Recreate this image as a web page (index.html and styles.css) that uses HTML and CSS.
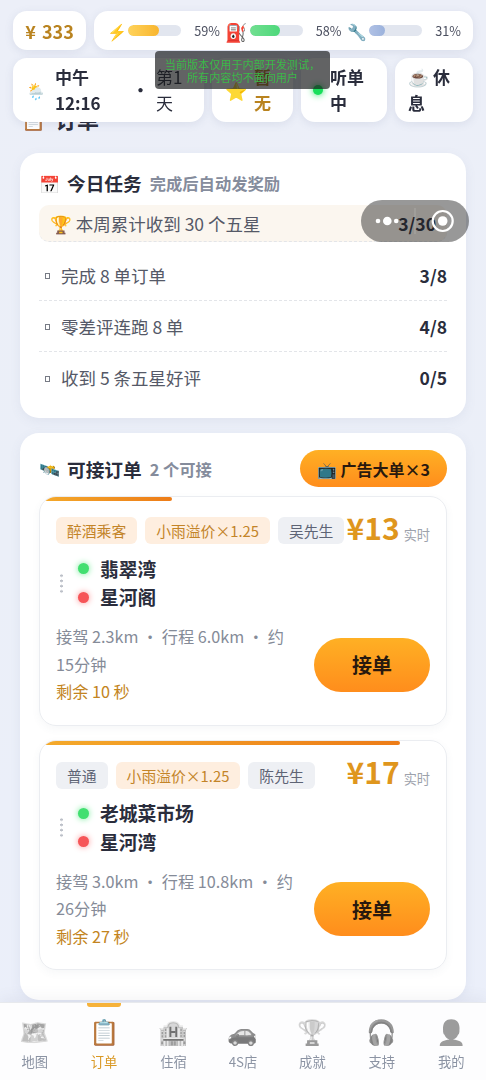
FILE: index.html
```html
<!DOCTYPE html>
<html lang="zh-CN">
<head>
<meta charset="utf-8">
<meta name="viewport" content="width=device-width, initial-scale=1">
<title>订单</title>
<link rel="stylesheet" href="styles.css">
</head>
<body>
<header class="hud">
  <div class="hud-row hud-top">
    <div class="panel coins">¥ 333</div>
    <div class="panel meters">
      <div class="meter"><span class="meter-icon">⚡</span><span class="track"><i class="fill gold" style="width:59%"></i></span><b class="pct">59%</b></div>
      <div class="meter"><span class="meter-icon fuel">⛽</span><span class="track"><i class="fill green" style="width:58%"></i></span><b class="pct">58%</b></div>
      <div class="meter"><span class="meter-icon wrench">🔧</span><span class="track"><i class="fill blue" style="width:31%"></i></span><b class="pct">31%</b></div>
    </div>
  </div>
  <div class="hud-row hud-bottom">
    <div class="panel clock"><span class="weather">🌦️</span><strong class="time">中午<br>12:16</strong><span class="sep">·</span><span class="day">第1<br>天</span></div>
    <div class="panel rating"><span class="star">⭐</span><strong class="none">暂<br>无</strong></div>
    <div class="panel listening"><span class="live"></span><strong>听单<br>中</strong></div>
    <div class="panel rest"><strong><span class="cup">☕</span> 休<br>息</strong></div>
  </div>
</header>

<main class="page">
  <h1 class="page-title"><span class="title-icon">📋</span>订单</h1>

  <section class="card tasks">
    <div class="card-head"><span class="head-icon">📅</span><h2>今日任务</h2><span class="hint">完成后自动发奖励</span></div>
    <div class="task weekly"><span>🏆 本周累计收到 30 个五星</span><b>3/30</b></div>
    <div class="task"><i class="box"></i><span>完成 8 单订单</span><b>3/8</b></div>
    <div class="task"><i class="box"></i><span>零差评连跑 8 单</span><b>4/8</b></div>
    <div class="task"><i class="box"></i><span>收到 5 条五星好评</span><b>0/5</b></div>
  </section>

  <section class="card orders">
    <div class="card-head"><span class="head-icon">🛰️</span><h2>可接订单</h2><span class="hint">2 个可接</span><button class="btn ad">📺 广告大单×3</button></div>

    <article class="order">
      <div class="progress" style="width:32.5%"></div>
      <div class="order-top"><div class="tags"><span class="tag warm">醉酒乘客</span><span class="tag warm">小雨溢价×1.25</span><span class="tag">吴先生</span></div><div class="price">¥13<small>实时</small></div></div>
      <div class="route"><i class="dots"></i><ul><li class="from">翡翠湾</li><li class="to">星河阁</li></ul></div>
      <div class="order-foot"><p>接驾 2.3km ・ 行程 6.0km ・ 约<br>15分钟<br><em>剩余 10 秒</em></p><button class="btn take">接单</button></div>
    </article>

    <article class="order">
      <div class="progress" style="width:88.6%"></div>
      <div class="order-top"><div class="tags"><span class="tag">普通</span><span class="tag warm">小雨溢价×1.25</span><span class="tag">陈先生</span></div><div class="price">¥17<small>实时</small></div></div>
      <div class="route"><i class="dots"></i><ul><li class="from">老城菜市场</li><li class="to">星河湾</li></ul></div>
      <div class="order-foot"><p>接驾 3.0km ・ 行程 10.8km ・ 约<br>26分钟<br><em>剩余 27 秒</em></p><button class="btn take">接单</button></div>
    </article>
  </section>
</main>

<div class="notice">当前版本仅用于内部开发测试，<br>所有内容均不面向用户</div>
<div class="capsule">
  <svg width="108" height="42" viewBox="0 0 108 42">
    <g fill="#fff"><circle cx="17" cy="21" r="2.3"/><circle cx="26.3" cy="21" r="4.3"/><circle cx="35.2" cy="21" r="2.3"/><circle cx="81.7" cy="21" r="4.8"/></g>
    <path d="M54 8v26" stroke="#fff" stroke-opacity=".2"/>
    <circle cx="81.7" cy="21" r="10" fill="none" stroke="#fff" stroke-width="2.2"/>
  </svg>
</div>

<nav class="tabs">
  <a class="tab"><span>🗺️</span>地图</a>
  <a class="tab active"><span>📋</span>订单</a>
  <a class="tab"><span>🏨</span>住宿</a>
  <a class="tab"><span>🚗</span>4S店</a>
  <a class="tab"><span>🏆</span>成就</a>
  <a class="tab"><span>🎧</span>支持</a>
  <a class="tab"><span>👤</span>我的</a>
</nav>
</body>
</html>
```
FILE: styles.css
```css
* { box-sizing: border-box; }
body {
  margin: 0;
  height: 1080px;
  overflow: hidden;
  background: linear-gradient(180deg, #eceff8, #ebeff8 50%, #ebeffa);
  color: #2a2d3c;
  font-family: "Noto Sans CJK SC", "Noto Color Emoji", sans-serif;
}
h1, h2, p, ul { margin: 0; padding: 0; }
button { border: 0; font-family: inherit; }
strong, b { font-weight: 700; }

/* Status panels */
.hud { position: fixed; z-index: 5; top: 11px; left: 13px; right: 13px; display: flex; flex-direction: column; gap: 8px; }
.hud-row { display: flex; gap: 8px; }
.hud-top { height: 39px; }
.hud-bottom { height: 64px; line-height: 26px; font-size: 17px; }
.panel { display: flex; align-items: center; background: #fff; border-radius: 14px; box-shadow: 0 2px 8px rgba(90, 105, 145, .13); white-space: nowrap; }
.coins { width: 73px; justify-content: center; color: #b9831f; font-size: 18px; font-weight: 700; word-spacing: 2px; }
.meters { flex: 1; padding: 0 12px 0 13px; justify-content: space-between; }
.meter { display: flex; align-items: center; }
.meter-icon { width: 21px; font-size: 16px; line-height: 20px; }
.meter .fuel { width: 24px; font-size: 18px; }
.meter .wrench { width: 22px; }
.track { width: 53px; height: 11px; border-radius: 6px; background: #e2e6ef; overflow: hidden; }
.fill { display: block; height: 100%; border-radius: 6px; }
.gold { background: linear-gradient(90deg, #ffd35b, #f8b52e); }
.green { background: linear-gradient(90deg, #72df91, #4dd87a); }
.blue { background: linear-gradient(90deg, #b0c1e5, #9bb2dc); }
.pct { width: 39px; text-align: right; font-size: 12.7px; font-weight: 400; color: #4c5060; }
.clock { width: 191px; padding-left: 13px; }
.weather { width: 29px; font-size: 16px; }
.time { width: 77px; }
.sep { width: 24px; font-weight: 700; }
.day { font-weight: 400; }
.rating { width: 81px; padding-left: 13px; }
.star { width: 29px; font-size: 18px; }
.none { color: #b9831f; }
.listening { width: 86px; padding-left: 12px; gap: 7px; }
.live { width: 10px; height: 10px; border-radius: 50%; background: #18df5b; box-shadow: 0 0 7px #18df5b; }
.rest { flex: 1; padding-left: 13px; }
.cup { font-size: 17px; }

/* Content */
.page { padding: 102px 20px 0; }
.page-title { display: flex; align-items: center; height: 32px; font-size: 22px; font-weight: 700; gap: 9px; padding-left: 1px; }
.title-icon { font-size: 20px; }
.card { padding: 16px 19px 0; border-radius: 19px; background: #fff; box-shadow: 0 3px 12px rgba(90, 105, 140, .08); }
.card-head { display: flex; align-items: center; white-space: nowrap; }
.head-icon { width: 28px; font-size: 17px; }
h2 { font-size: 18.7px; font-weight: 700; line-height: 30px; }
.hint { margin-left: 8px; color: #858c9c; font-size: 16.3px; font-weight: 700; }
.tasks { height: 265px; margin-top: 19px; padding-top: 15px; }
.task { display: flex; align-items: center; height: 51px; border-bottom: 1px dashed #e3e5e9; color: #555967; font-size: 17.5px; }
.task b { margin-left: auto; color: #2a2d3c; }
.task:last-child { border: 0; }
.weekly { height: 37px; margin: 7px 0 8px; padding: 0 11px; border-radius: 10px; background: #fbf6ef; }
.box { width: 5px; height: 6px; margin: 2px 11px 0 6px; border: 1px solid #777b85; }

.orders { height: 567px; margin-top: 15px; padding-top: 17px; }
.btn { background: linear-gradient(180deg, #ffb024, #ff8d1c); color: #29190e; font-weight: 700; border-radius: 30px; white-space: nowrap; padding: 0; }
.ad { width: 147px; height: 37px; margin-left: auto; font-size: 16px; }
.order { position: relative; height: 230px; margin-top: 8.5px; padding: 16px 16px 0; border: 1px solid #ebedf1; border-radius: 17px; overflow: hidden; box-shadow: 0 3px 8px rgba(80, 90, 110, .05); }
.order + .order { margin-top: 14.5px; }
.progress { position: absolute; top: 0; left: 0; height: 4px; border-radius: 0 2px 2px 0; background: linear-gradient(90deg, #f4aa2b, #ed7c18); }
.order-top { display: flex; justify-content: space-between; height: 36px; align-items: center; }
.tags { display: flex; gap: 8px; }
.tag { padding: 0 11px; border-radius: 6px; background: #eef0f4; color: #5e6475; font-size: 14.8px; line-height: 27px; white-space: nowrap; }
.warm { background: #feeedf; color: #c38428; }
.price { color: #df961d; font-size: 30px; font-weight: 700; line-height: 36px; white-space: nowrap; }
.price small { margin-left: 4px; color: #9da2ac; font-size: 13.2px; font-weight: 400; }
.route { display: flex; align-items: center; height: 58px; margin-top: 5.5px; }
.dots { width: 3px; height: 21px; margin-left: 4px; background: radial-gradient(circle, #bcc0c8 1.1px, transparent 1.5px) 0 0 / 3px 5.25px; }
.route ul { margin-left: 15px; list-style: none; font-size: 18.8px; font-weight: 700; line-height: 28.4px; }
.route li { display: flex; align-items: center; }
.route li::before { content: ""; width: 11px; height: 11px; margin-right: 11px; border-radius: 50%; }
.route .from::before { background: #42df70; box-shadow: 0 0 6px #73e997; }
.route .to::before { background: #f65558; box-shadow: 0 0 6px #fa9496; }
.order-foot { display: flex; justify-content: space-between; align-items: center; margin-top: 11px; }
.order-foot p { color: #858b98; font-size: 16.2px; line-height: 27.7px; white-space: nowrap; }
.order-foot em { color: #c38420; font-style: normal; }
.take { width: 116px; height: 54px; font-size: 20px; }

/* Overlays */
.notice { position: fixed; z-index: 8; left: 155px; top: 51px; width: 175px; height: 38px; padding-top: 7px; border-radius: 4px; background: rgba(24, 25, 27, .68); color: #3cbc49; font-size: 11.1px; line-height: 13px; text-align: center; white-space: nowrap; }
.capsule { position: fixed; z-index: 8; left: 361px; top: 200px; width: 108px; height: 42px; border-radius: 21px; background: rgba(30, 30, 30, .46); }

/* Bottom navigation */
.tabs { position: fixed; z-index: 4; left: 0; right: 0; bottom: 0; height: 78px; display: flex; background: #fdfdfe; border-top: 1px solid #e7e9ed; box-shadow: 0 -4px 14px rgba(80, 90, 120, .07); }
.tab { position: relative; flex: 1; display: flex; flex-direction: column; align-items: center; padding-top: 8px; color: #8b93a3; font-size: 13.3px; line-height: 20px; }
.tab span { height: 41px; font-size: 24.5px; line-height: 39px; filter: grayscale(1); opacity: .65; }
.active { color: #d99824; }
.tab.active span { filter: none; opacity: 1; }
.active::before { content: ""; position: absolute; top: 0; width: 34px; height: 4px; border-radius: 0 0 3px 3px; background: #f6b23a; }
```
